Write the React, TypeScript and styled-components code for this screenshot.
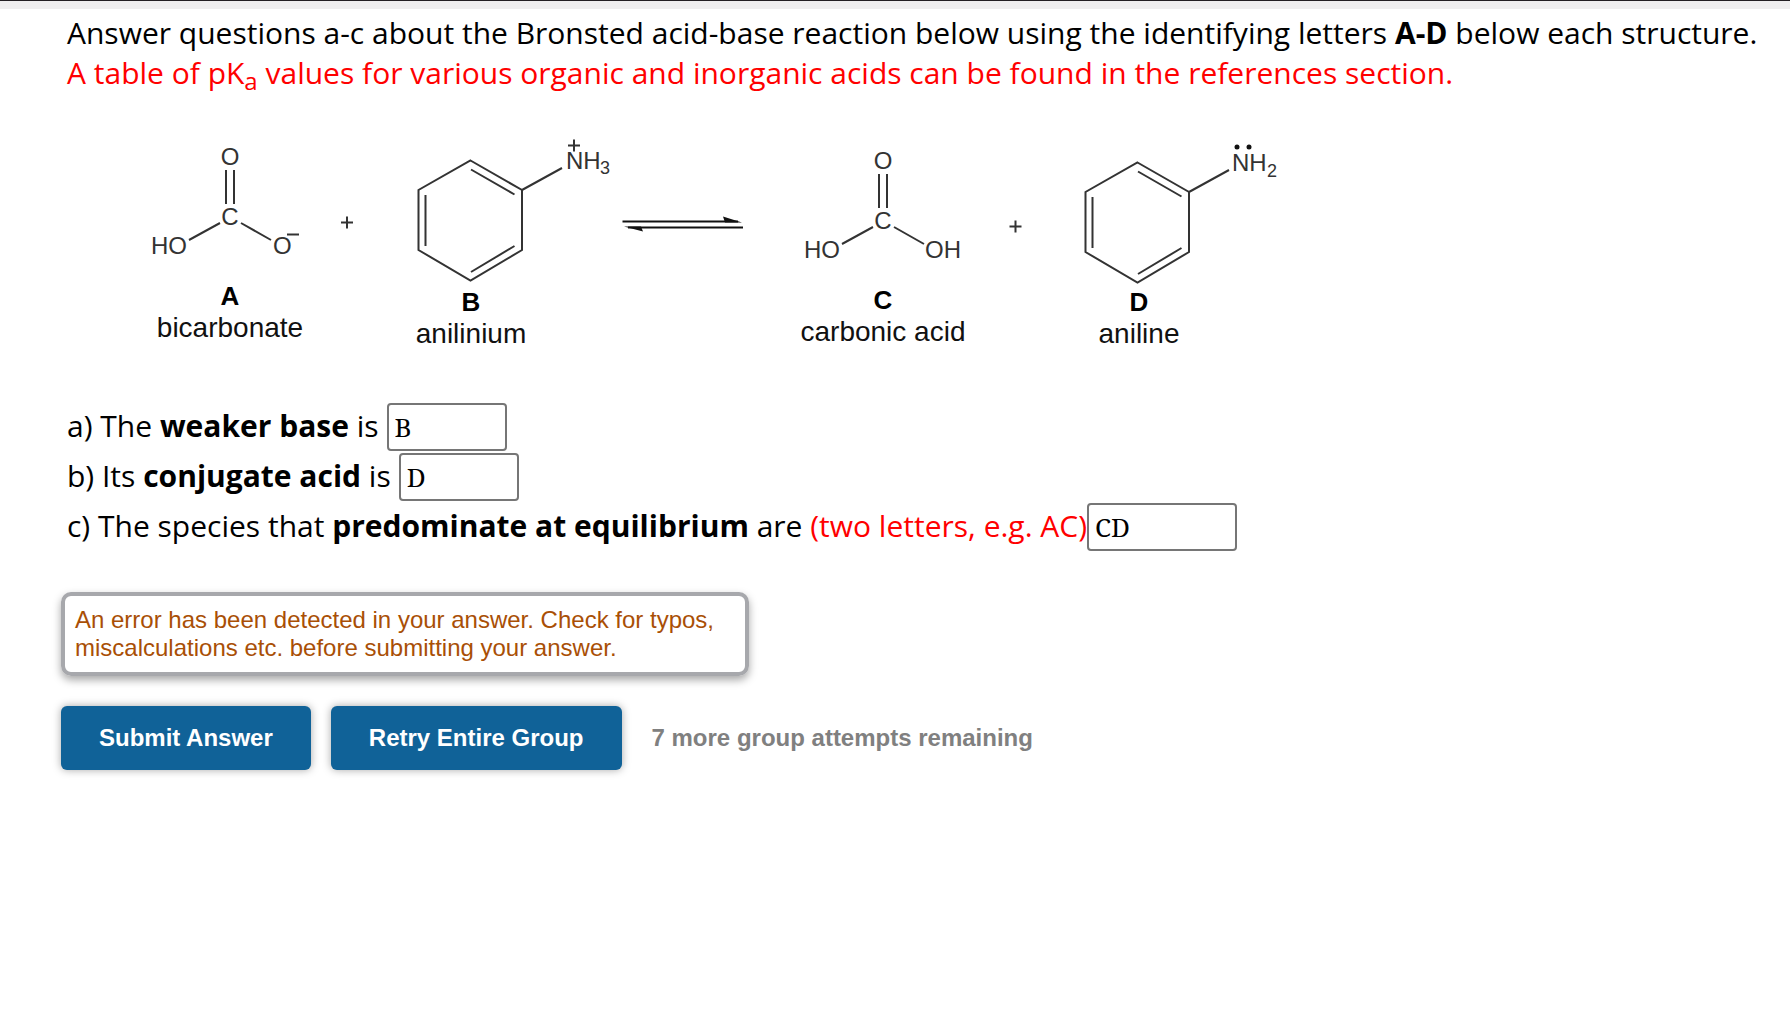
import React from "react";
import styled, { createGlobalStyle } from "styled-components";

const GlobalStyle = createGlobalStyle`
  *, *::before, *::after { box-sizing: border-box; }
  body {
    margin: 0;
    background: #fff;
    color: #000;
    font-family: "Open Sans", "Noto Sans", sans-serif;
  }
`;

const sans = `"Liberation Sans", Arial, sans-serif`;

const TopBar = styled.div`
  height: 9px;
  border-top: 1px solid #231f23;
  background: #efeeef;
`;

const Page = styled.main`
  padding: 4px 24px 40px 61px;
`;

const Problem = styled.section`
  padding: 0 6px;
  font-size: 30px;
  line-height: 40px;
`;

const Prompt = styled.p`
  margin: 0;
`;

const Red = styled.span`
  color: #ff0000;
`;

const Sub = styled.sub`
  font-size: 24px;
  line-height: 0;
  vertical-align: -6px;
`;

const Diagram = styled.svg`
  display: block;
  width: 1160px;
  max-width: 100%;
  height: auto;
  margin: 37px 0 43px 73px;
  font-family: ${sans};
`;

const Questions = styled.form`
  display: flex;
  flex-direction: column;
  gap: 2px;
`;

const Question = styled.div<{ $gap: number }>`
  display: flex;
  align-items: center;
  gap: ${(p) => p.$gap}px;

  label {
    padding-bottom: 2px;
  }
`;

const Answer = styled.input<{ $width: number }>`
  width: ${(p) => p.$width}px;
  height: 48px;
  padding: 0 6px;
  border: 2px solid #767676;
  border-radius: 4px;
  background: #fff;
  color: #000;
  font: 26px "Noto Serif", "Liberation Serif", serif;
`;

const Notice = styled.div`
  width: 688px;
  max-width: 100%;
  margin-top: 41px;
  padding: 10px;
  border: 4px solid #a7a8ac;
  border-radius: 10px;
  box-shadow: 0 4px 8px rgba(0, 0, 0, 0.35);
  color: #a94f06;
  font: 24px/28px ${sans};
`;

const Actions = styled.div`
  display: flex;
  flex-wrap: wrap;
  align-items: center;
  gap: 20px;
  margin-top: 30px;
  font-family: ${sans};
`;

const Button = styled.button`
  height: 64px;
  padding: 0 38px;
  border: 0;
  border-radius: 6px;
  background: #106298;
  box-shadow: 0 0 8px rgba(0, 0, 0, 0.35);
  color: #fff;
  font: bold 24px ${sans};
`;

const Remaining = styled.span`
  padding-left: 10px;
  color: #808080;
  font-size: 24px;
  font-weight: bold;
`;

const ink = "#333";

function Plus({ x, y }: { x: number; y: number }) {
  return <path d={`M${x - 6} ${y}h12M${x} ${y - 6}v12`} />;
}

function Carbonyl() {
  return (
    <>
      <path d="M226 170V204M234 170V204M189 240L220 223M241 223L271 240" />
      <g fill={ink} stroke="none" fontSize="24">
        <text x="230" y="165" textAnchor="middle">O</text>
        <text x="230" y="225" textAnchor="middle">C</text>
        <text x="151" y="254">HO</text>
      </g>
    </>
  );
}

function Ring() {
  return (
    <path d="M470.5 160.5L522 190V250L470.5 280.5L418.5 250V190ZM471 169.5L514.5 194.500M514.5 246L471 272M425.5 195V246M522 190L562 168" />
  );
}

function Caption({ x, y, letter, name }: { x: number; y: number; letter: string; name: string }) {
  return (
    <g textAnchor="middle" stroke="none">
      <text x={x} y={y} fontSize="26" fontWeight="bold" fill="#000">{letter}</text>
      <text x={x} y={y + 32} fontSize="28" fill="#111">{name}</text>
    </g>
  );
}

function Reaction() {
  return (
    <Diagram
      viewBox="140 130 1160 230"
      role="img"
      aria-label="Bicarbonate plus anilinium in equilibrium with carbonic acid plus aniline"
      fill="none"
      stroke={ink}
      strokeWidth="2"
    >
      <Carbonyl />
      <text x="273" y="254" fontSize="24" fill={ink} stroke="none">O</text>
      <path d="M287 234.5H299" />
      <Caption x={230} y={305} letter="A" name="bicarbonate" />

      <Plus x={347} y={222.5} />

      <Ring />
      <g fill={ink} stroke="none">
        <text x="566" y="169" fontSize="24">NH</text>
        <text x="600" y="174" fontSize="18">3</text>
      </g>
      <Plus x={574} y={145.5} />
      <Caption x={471} y={311} letter="B" name="anilinium" />

      <path d="M622.5 221.5H738M628 227.5H743" stroke="#111" strokeWidth="2.2" />
      <path d="M723 216.5L742 222.5H725ZM643 231.5L624 226.5H641Z" fill="#111" stroke="none" />

      <g transform="translate(653 4)">
        <Carbonyl />
        <text x="272" y="254" fontSize="24" fill={ink} stroke="none">OH</text>
      </g>
      <Caption x={883} y={309} letter="C" name="carbonic acid" />

      <Plus x={1015.5} y={226.5} />

      <g transform="translate(667 2)">
        <Ring />
      </g>
      <g fill={ink} stroke="none">
        <text x="1232" y="171" fontSize="24">NH</text>
        <text x="1267" y="177" fontSize="18">2</text>
      </g>
      <g fill="#111" stroke="none">
        <circle cx="1237" cy="147" r="2.5" />
        <circle cx="1249" cy="147" r="2.5" />
      </g>
      <Caption x={1139} y={311} letter="D" name="aniline" />
    </Diagram>
  );
}

export default function App() {
  return (
    <>
      <GlobalStyle />
      <TopBar />
      <Page>
        <Problem>
          <Prompt>
            Answer questions a-c about the Bronsted acid-base reaction below using the identifying
            letters <b>A-D</b> below each structure.
          </Prompt>
          <Prompt>
            <Red>
              A table of pK<Sub>a</Sub> values for various organic and inorganic acids can be found
              in the references section.
            </Red>
          </Prompt>
          <Reaction />
          <Questions id="answers" onSubmit={(e) => e.preventDefault()}>
            <Question $gap={8}>
              <label htmlFor="weaker-base">
                a) The <b>weaker base</b> is
              </label>
              <Answer id="weaker-base" $width={120} defaultValue="B" />
            </Question>
            <Question $gap={8}>
              <label htmlFor="conjugate-acid">
                b) Its <b>conjugate acid</b> is
              </label>
              <Answer id="conjugate-acid" $width={120} defaultValue="D" />
            </Question>
            <Question $gap={0}>
              <label htmlFor="species">
                c) The species that <b>predominate at equilibrium</b> are{" "}
                <Red>(two letters, e.g. AC)</Red>
              </label>
              <Answer id="species" $width={150} defaultValue="CD" />
            </Question>
          </Questions>
        </Problem>
        <Notice role="status">
          An error has been detected in your answer. Check for typos, miscalculations etc. before
          submitting your answer.
        </Notice>
        <Actions>
          <Button type="submit" form="answers">Submit Answer</Button>
          <Button type="button">Retry Entire Group</Button>
          <Remaining>7 more group attempts remaining</Remaining>
        </Actions>
      </Page>
    </>
  );
}
